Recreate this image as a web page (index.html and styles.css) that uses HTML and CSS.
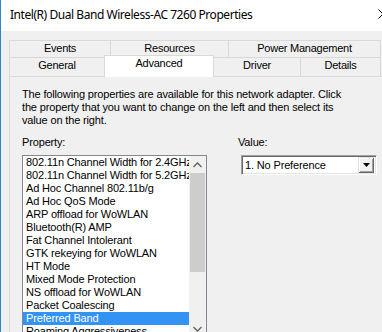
FILE: index.html
```html
<!DOCTYPE html>
<html>
<head>
<meta charset="utf-8">
<link rel="stylesheet" href="styles.css">
</head>
<body>
<div class="window">
  <div class="titlebar">
    <span class="title">Intel(R) Dual Band Wireless-AC 7260 Properties</span>
    <svg class="close" width="10" height="10" viewBox="0 0 10 10"><path d="M0.5 0.5 L9.5 9.5 M9.5 0.5 L0.5 9.5" stroke="#000" stroke-width="1" fill="none"/></svg>
  </div>
  <div class="sheet">
    <div class="tabrow">
      <div class="tab t-events">Events</div>
      <div class="tab t-resources">Resources</div>
      <div class="tab t-power last">Power Management</div>
    </div>
    <div class="tabrow front">
      <div class="tab t-general">General</div>
      <div class="tab t-advanced active">Advanced</div>
      <div class="tab t-driver">Driver</div>
      <div class="tab t-details last">Details</div>
    </div>
    <div class="panel">
      <p class="intro">The following properties are available for this network adapter. Click<br>the property that you want to change on the left and then select its<br>value on the right.</p>
      <div class="fields">
        <div class="field">
          <div class="label">Property:</div>
          <div class="listbox">
            <div class="items">
              <div class="item">802.11n Channel Width for 2.4GHz</div>
              <div class="item">802.11n Channel Width for 5.2GHz</div>
              <div class="item">Ad Hoc Channel 802.11b/g</div>
              <div class="item">Ad Hoc QoS Mode</div>
              <div class="item">ARP offload for WoWLAN</div>
              <div class="item">Bluetooth(R) AMP</div>
              <div class="item">Fat Channel Intolerant</div>
              <div class="item">GTK rekeying for WoWLAN</div>
              <div class="item">HT Mode</div>
              <div class="item">Mixed Mode Protection</div>
              <div class="item">NS offload for WoWLAN</div>
              <div class="item">Packet Coalescing</div>
              <div class="item selected">Preferred Band</div>
              <div class="item">Roaming Aggressiveness</div>
            </div>
            <div class="scrollbar">
              <div class="sb-btn"><svg width="9" height="6" viewBox="0 0 9 6"><path d="M0.5 5 L4.5 1 L8.5 5" stroke="#606060" stroke-width="1.3" fill="none"/></svg></div>
              <div class="sb-track"><div class="sb-thumb"></div></div>
              <div class="sb-btn"><svg width="9" height="6" viewBox="0 0 9 6"><path d="M0.5 1 L4.5 5 L8.5 1" stroke="#606060" stroke-width="1.3" fill="none"/></svg></div>
            </div>
          </div>
        </div>
        <div class="field">
          <div class="label">Value:</div>
          <div class="combo">
            <span class="combo-text">1. No Preference</span>
            <div class="combo-btn"><svg width="7" height="4" viewBox="0 0 7 4"><path d="M0 0 L7 0 L3.5 4 Z" fill="#000"/></svg></div>
          </div>
        </div>
      </div>
    </div>
  </div>
</div>
</body>
</html>
```

FILE: styles.css
```css
html, body {
  margin: 0;
  padding: 0;
}
body {
  width: 382px;
  height: 332px;
  overflow: hidden;
  background: #f0f0f0;
  font-family: "Liberation Sans", Arial, sans-serif;
  font-size: 11px;
  letter-spacing: -0.15px;
  color: #000;
}
.window {
  width: 381px;
  height: 332px;
  border-left: 1px solid #2b88c8;
  overflow: hidden;
  background: #f0f0f0;
}
.titlebar {
  height: 31px;
  background: #fff;
  display: flex;
  align-items: center;
  padding-left: 9px;
  font-family: "Noto Sans", "Open Sans", sans-serif;
  font-size: 12px;
  white-space: nowrap;
  box-sizing: border-box;
}
.title {
  letter-spacing: -0.45px;
  margin-top: -3px;
}
.close {
  margin-left: auto;
  margin-right: -6px;
  margin-top: -3px;
  flex: none;
}
.sheet {
  padding: 9px 0 0 8px;
}
.tabrow {
  display: flex;
  height: 17px;
}
.tabrow.front {
  height: 19px;
}
.tab {
  box-sizing: border-box;
  border-top: 1px solid #d9d9d9;
  border-left: 1px solid #d9d9d9;
  text-align: center;
  line-height: 13px;
  padding-top: 1px;
  background: #f0f0f0;
  white-space: nowrap;
  letter-spacing: -0.25px;
}
.tab.last {
  border-right: 1px solid #d9d9d9;
}
.t-events { width: 101px; }
.t-resources { width: 118px; }
.t-power { width: 153px; }
.t-general { width: 95px; }
.t-advanced { width: 110px; }
.t-driver { width: 86px; }
.t-details { width: 81px; }
.tab.active {
  background: #fff;
  margin-top: -2px;
  height: 22px;
  border-right: 1px solid #d9d9d9;
  position: relative;
  z-index: 1;
}
.tab.active + .tab {
  border-left: none;
}
.panel {
  border-top: 1px solid #d9d9d9;
  border-left: 1px solid #d9d9d9;
  background: #f0f0f0;
  padding: 11px 0 0 12px;
  height: 300px;
}
.intro {
  margin: 0;
  line-height: 13px;
  white-space: nowrap;
}
.fields {
  display: grid;
  grid-template-columns: 185px 144px;
  column-gap: 31px;
  margin-top: 9px;
}
.label {
  line-height: 13px;
  margin-bottom: 6px;
}
.listbox {
  box-sizing: border-box;
  height: 183px;
  border: 1px solid #828790;
  background: #fff;
  display: flex;
}
.items {
  flex: 1;
  overflow: hidden;
}
.item {
  height: 13px;
  line-height: 13px;
  padding-left: 3px;
  white-space: nowrap;
}
.item.selected {
  background: #3393f5;
  color: #fff;
}
.scrollbar {
  width: 17px;
  flex: none;
  background: #f0f0f0;
  display: flex;
  flex-direction: column;
}
.sb-btn {
  height: 17px;
  display: flex;
  align-items: center;
  justify-content: center;
  flex: none;
}
.sb-track {
  flex: 1;
  padding: 0 1px;
}
.sb-thumb {
  height: 99px;
  background: #cdcdcd;
}
.combo {
  box-sizing: border-box;
  width: 136px;
  height: 20px;
  margin-left: 3px;
  background: #fff;
  border-top: 1px solid #a0a0a0;
  border-left: 1px solid #a0a0a0;
  border-right: 1px solid #fff;
  border-bottom: 1px solid #fff;
  box-shadow: inset 1px 1px 0 #696969, inset -1px -1px 0 #e3e3e3;
  display: flex;
  align-items: center;
  padding: 2px 2px 2px 3px;
}
.combo-text {
  flex: 1;
  white-space: nowrap;
  line-height: 13px;
}
.combo-btn {
  width: 16px;
  height: 16px;
  box-sizing: border-box;
  background: #f0f0f0;
  box-shadow: inset 1px 1px 0 #e3e3e3, inset -1px -1px 0 #696969, inset 2px 2px 0 #fff, inset -2px -2px 0 #a0a0a0;
  display: flex;
  align-items: center;
  justify-content: center;
}
```
